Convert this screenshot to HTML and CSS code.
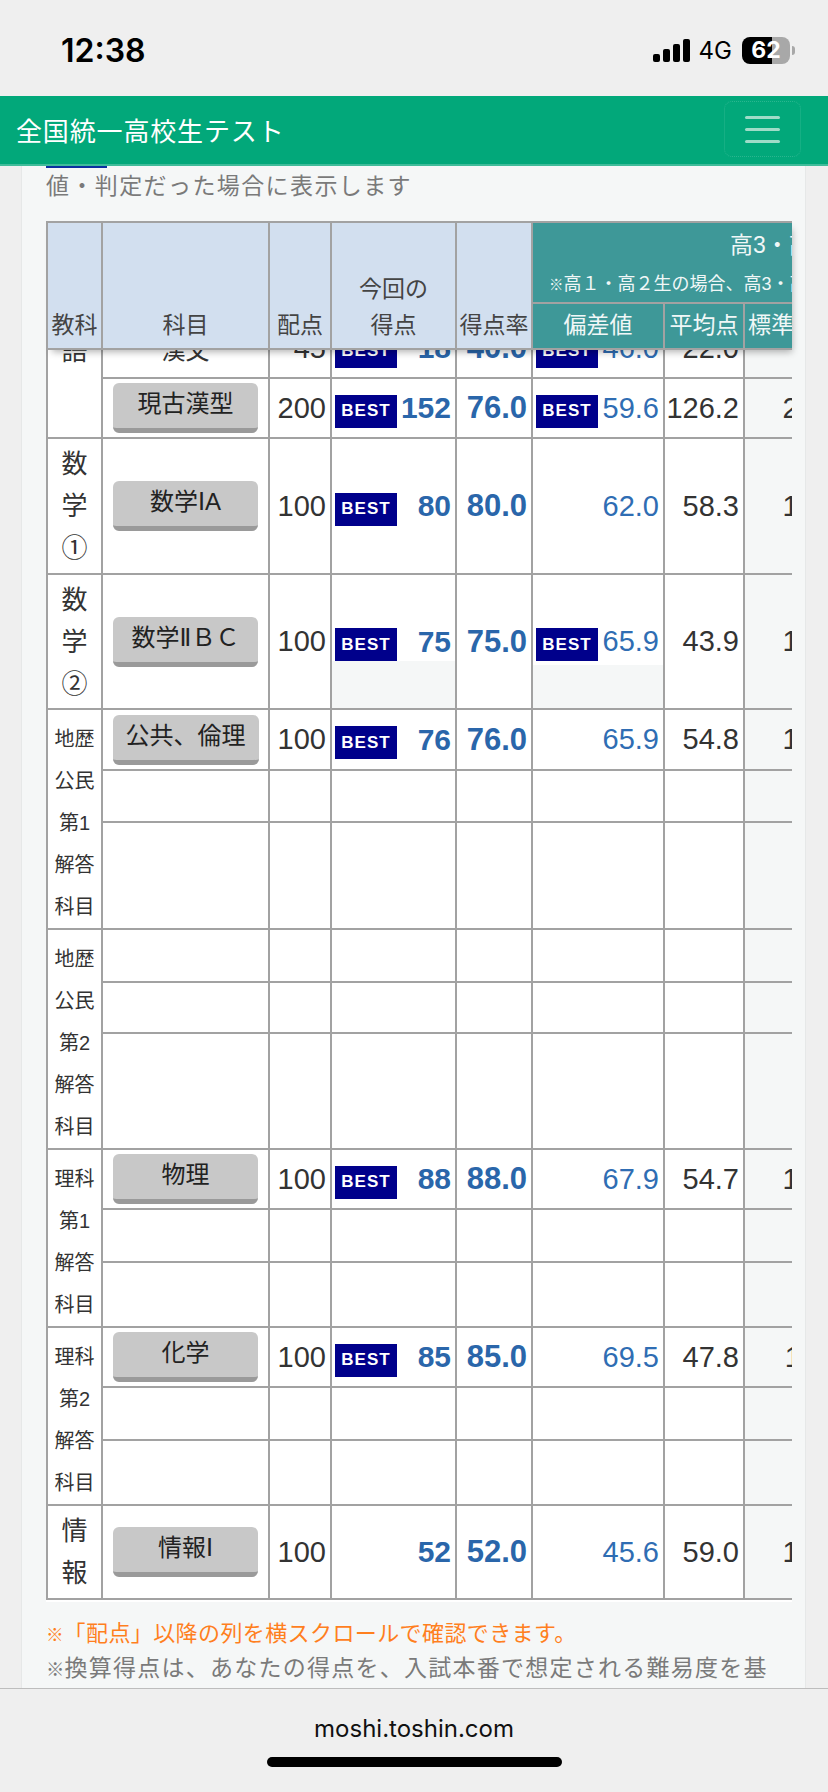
FILE: index.html
```html
<!DOCTYPE html>
<html lang="ja">
<head>
<meta charset="utf-8">
<title>全国統一高校生テスト</title>
<link rel="stylesheet" href="styles.css">
</head>
<body>
<div class="screen">
  <header class="status">
    <span class="clock">12:38</span>
    <div class="status-right">
      <svg class="signal" width="37" height="23" viewBox="0 0 37 23"><rect x="0" y="15" width="7" height="8" rx="2"/><rect x="10" y="10" width="7" height="13" rx="2"/><rect x="20" y="5" width="7" height="18" rx="2"/><rect x="30" y="0" width="7" height="23" rx="2"/></svg>
      <span class="net">4G</span>
      <div class="battery"><span class="battery-num">62</span></div>
      <span class="battery-tip"></span>
    </div>
  </header>
  <nav class="nav">
    <span class="brand">全国統一高校生テスト</span>
    <button class="burger"><span></span><span></span><span></span></button>
  </nav>
  <main class="main">
    <section class="card">
      <div class="mark"></div>
      <p class="lead">値・判定だった場合に表示します</p>
      <div class="head-clip">
        <table class="grid head">
          <colgroup><col class="c1"><col class="c2"><col class="c3"><col class="c4"><col class="c5"><col class="c6"><col class="c7"><col class="c8"></colgroup>
          <tr class="hr1">
            <th rowspan="2">教科</th><th rowspan="2">科目</th><th rowspan="2">配点</th><th rowspan="2">今回の<br>得点</th><th rowspan="2">得点率</th>
            <th colspan="3" class="teal top"><div class="t-title">高3・高卒生全体</div><div class="t-note"><span class="kome">※</span>高１・高２生の場合、高3・高卒生の成績を表示</div></th>
          </tr>
          <tr class="hr2"><th class="teal">偏差値</th><th class="teal">平均点</th><th class="teal">標準偏差</th></tr>
        </table>
      </div>
      <div class="body-clip">
        <table class="grid body">
          <colgroup><col class="c1"><col class="c2"><col class="c3"><col class="c4"><col class="c5"><col class="c6"><col class="c7"><col class="c8"></colgroup>
          <tr class="r60">
            <td rowspan="2" class="subj top-a">語</td><td class="name">漢文</td><td class="num">45</td>
            <td><div class="val"><span class="best">BEST</span><b>18</b></div></td><td class="num"><b>40.0</b></td>
            <td><div class="val"><span class="best">BEST</span><span class="dev">46.0</span></div></td><td class="num">22.0</td><td class="num sd">9.1</td>
          </tr>
          <tr class="r60">
            <td class="name"><a class="btn">現古漢型</a></td><td class="num">200</td>
            <td><div class="val"><span class="best">BEST</span><b>152</b></div></td><td class="num"><b>76.0</b></td>
            <td><div class="val"><span class="best">BEST</span><span class="dev">59.6</span></div></td><td class="num">126.2</td><td class="num sd">28.4</td>
          </tr>
          <tr class="r136">
            <td class="subj">数<br>学<br>①</td><td class="name"><a class="btn">数学ⅠA</a></td><td class="num">100</td>
            <td><div class="val"><span class="best">BEST</span><b>80</b></div></td><td class="num"><b>80.0</b></td>
            <td><div class="val end"><span class="dev">62.0</span></div></td><td class="num">58.3</td><td class="num sd">19.1</td>
          </tr>
          <tr class="r135">
            <td class="subj">数<br>学<br>②</td><td class="name"><a class="btn">数学ⅡＢＣ</a></td><td class="num">100</td>
            <td class="fade-a"><div class="val"><span class="best">BEST</span><b>75</b></div></td><td class="num"><b>75.0</b></td>
            <td class="fade-b"><div class="val"><span class="best">BEST</span><span class="dev">65.9</span></div></td><td class="num">43.9</td><td class="num sd">16.8</td>
          </tr>
          <tr class="r61">
            <td rowspan="3" class="subj small">地歴<br>公民<br>第1<br>解答<br>科目</td><td class="name"><a class="btn">公共、倫理</a></td><td class="num">100</td>
            <td><div class="val"><span class="best">BEST</span><b>76</b></div></td><td class="num"><b>76.0</b></td>
            <td><div class="val end"><span class="dev">65.9</span></div></td><td class="num">54.8</td><td class="num sd">17.4</td>
          </tr>
          <tr class="r52"><td></td><td></td><td></td><td></td><td></td><td></td><td class="sd"></td></tr>
          <tr class="r107"><td></td><td></td><td></td><td></td><td></td><td></td><td class="sd"></td></tr>
          <tr class="r53">
            <td rowspan="3" class="subj small">地歴<br>公民<br>第2<br>解答<br>科目</td><td></td><td></td><td></td><td></td><td></td><td></td><td class="sd"></td>
          </tr>
          <tr class="r51"><td></td><td></td><td></td><td></td><td></td><td></td><td class="sd"></td></tr>
          <tr class="r116"><td></td><td></td><td></td><td></td><td></td><td></td><td class="sd"></td></tr>
          <tr class="r60">
            <td rowspan="3" class="subj small">理科<br>第1<br>解答<br>科目</td><td class="name"><a class="btn">物理</a></td><td class="num">100</td>
            <td><div class="val"><span class="best">BEST</span><b>88</b></div></td><td class="num"><b>88.0</b></td>
            <td><div class="val end"><span class="dev">67.9</span></div></td><td class="num">54.7</td><td class="num sd">15.2</td>
          </tr>
          <tr class="r53"><td></td><td></td><td></td><td></td><td></td><td></td><td class="sd"></td></tr>
          <tr class="r65"><td></td><td></td><td></td><td></td><td></td><td></td><td class="sd"></td></tr>
          <tr class="r60">
            <td rowspan="3" class="subj small">理科<br>第2<br>解答<br>科目</td><td class="name"><a class="btn">化学</a></td><td class="num">100</td>
            <td><div class="val"><span class="best">BEST</span><b>85</b></div></td><td class="num"><b>85.0</b></td>
            <td><div class="val end"><span class="dev">69.5</span></div></td><td class="num">47.8</td><td class="num sd">11.1</td>
          </tr>
          <tr class="r53"><td></td><td></td><td></td><td></td><td></td><td></td><td class="sd"></td></tr>
          <tr class="r65"><td></td><td></td><td></td><td></td><td></td><td></td><td class="sd"></td></tr>
          <tr class="r94">
            <td class="subj">情<br>報</td><td class="name"><a class="btn">情報Ⅰ</a></td><td class="num">100</td>
            <td><div class="val end"><b>52</b></div></td><td class="num"><b>52.0</b></td>
            <td><div class="val end"><span class="dev">45.6</span></div></td><td class="num">59.0</td><td class="num sd">17.9</td>
          </tr>
        </table>
      </div>
      <p class="note-orange"><span class="kome">※</span>「配点」以降の列を横スクロールで確認できます。</p>
      <p class="note-grey"><span class="kome">※</span>換算得点は、あなたの得点を、入試本番で想定される難易度を基</p>
    </section>
  </main>
  <footer class="urlbar">
    <span class="url">moshi.toshin.com</span>
    <span class="home"></span>
  </footer>
</div>
</body>
</html>
```
FILE: styles.css
```css
* { box-sizing: border-box; }
html, body { margin: 0; padding: 0; }
body { font-family: "Liberation Sans", "Noto Sans CJK JP", sans-serif; background: #efefef; }
.screen { width: 828px; height: 1792px; display: flex; flex-direction: column; overflow: hidden; background: #efefef; }

.status { height: 96px; flex: none; display: flex; justify-content: space-between; align-items: center; padding: 4px 33px 0 61px; background: #efefef; }
.clock { font-family: Inter, sans-serif; font-weight: 600; font-size: 32px; color: #000; }
.status-right { display: flex; align-items: center; }
.signal { fill: #000; margin-right: 9px; }
.net { font-family: Inter, sans-serif; font-size: 24px; color: #000; margin-right: 10px; }
.battery { width: 48px; height: 27px; border-radius: 8px; background: linear-gradient(90deg, #000 0 30px, #a8a8a8 30px); display: flex; align-items: center; justify-content: center; }
.battery-num { font-family: Inter, sans-serif; font-weight: 700; font-size: 23px; color: #fff; }
.battery-tip { width: 3px; height: 9px; margin-left: 2px; background: #a8a8a8; border-radius: 0 3px 3px 0; }

.nav { height: 70px; flex: none; display: flex; justify-content: space-between; align-items: center; padding: 0 27px 2px 16px; background: #02a87a; border-bottom: 2px solid #40bc9a; position: relative; z-index: 3; }
.brand { color: #fff; font-size: 26px; letter-spacing: 0.85px; }
.burger { width: 77px; height: 56px; border: 1px dotted rgba(255,255,255,.16); border-radius: 8px; background: transparent; padding: 0; display: flex; flex-direction: column; align-items: center; justify-content: center; gap: 9px; }
.burger span { display: block; width: 35px; height: 3px; background: #9fdcc8; border-radius: 2px; }

.main { flex: 1; overflow: hidden; padding: 0 21px; }
.card { height: 100%; background: #f5f7f7; border-left: 1px solid #e6e8e8; border-right: 1px solid #e6e8e8; padding: 0 0 0 24px; width: 785px; }
.mark { width: 61px; height: 2px; background: #0a2fa0; }
.lead { margin: 0; padding-top: 2px; height: 53px; font-size: 23px; letter-spacing: 1.4px; line-height: 32px; color: #7a7a7a; }
.kome { font-size: 0.8em; letter-spacing: 0; }

.head-clip { width: 746px; overflow: hidden; box-shadow: 3px 5px 7px -3px rgba(0,0,0,.3); position: relative; z-index: 2; }
.body-clip { width: 746px; height: 1252px; overflow: hidden; background: #fff; }

.grid { table-layout: fixed; border-collapse: collapse; width: 797px; color: #333; }
.c1 { width: 55px; } .c2 { width: 167px; } .c3 { width: 62px; } .c4 { width: 125px; }
.c5 { width: 76px; } .c6 { width: 132px; } .c7 { width: 80px; } .c8 { width: 100px; }
.grid th, .grid td { border: 2px solid #a2a2a2; padding: 0; }

.head th { background: #d2dfef; font-weight: 400; font-size: 23px; line-height: 36px; color: #444; vertical-align: bottom; padding-bottom: 5px; white-space: nowrap; overflow: hidden; }
.hr1 { height: 81px; }
.hr2 { height: 46px; }
.head th.teal { background: #3e9898; color: #f0f7f7; text-align: center; }
.head th.top { text-align: left; vertical-align: top; overflow: visible; padding: 0; }
.t-title { padding: 5px 0 0 197px; line-height: 34px; font-size: 23px; }
.t-note { padding: 6px 0 0 16px; line-height: 32px; font-size: 18px; }

.body { margin-top: -33px; background: #fff; }
.r60 { height: 60px; } .r136 { height: 136px; } .r135 { height: 135px; } .r61 { height: 61px; }
.r52 { height: 52px; } .r107 { height: 107px; } .r53 { height: 53px; } .r51 { height: 51px; }
.r116 { height: 116px; } .r65 { height: 65px; } .r94 { height: 94px; }

.subj { text-align: center; font-size: 26px; line-height: 42px; color: #333; }
.subj.small { font-size: 20px; padding-top: 7px; }
.subj.top-a { vertical-align: top; padding-top: 11px; }
.name { text-align: center; font-size: 24px; color: #333; padding-right: 2px; }
.btn { display: inline-block; min-width: 145px; height: 50px; line-height: 42px; padding: 0 13px; font-family: "Liberation Sans", "DejaVu Sans", "Noto Sans CJK JP", sans-serif; font-size: 24px; color: #222; background: #c8c8c8; border-bottom: 5px solid #9a9a9a; border-radius: 6px; vertical-align: middle; }
.num { text-align: right; padding-right: 4px !important; font-size: 29px; color: #333; }
.num b { font-size: 31px; color: #2a66aa; }
.val b { font-size: 30px; color: #2a66aa; }
.sd { background: #f5f7f7; }
.val { display: flex; justify-content: space-between; align-items: center; padding: 0 4px 0 3px; font-size: 29px; }
.val.end { justify-content: flex-end; }
.dev { color: #2f6db3; }
.best { width: 62px; height: 33px; margin-top: 6px; background: #00008b; color: #fff; font-weight: 700; font-size: 17px; letter-spacing: 1px; display: flex; align-items: center; justify-content: center; }
.fade-a { background: linear-gradient(#fff 0 86px, #f5f7f7 86px); }
.fade-b { background: linear-gradient(#fff 0 90px, #f5f7f7 90px); }

.note-orange { margin: 0; padding-top: 15px; line-height: 33px; font-size: 22px; letter-spacing: 0.4px; color: #ff7f1e; white-space: nowrap; }
.note-grey { margin: 0; line-height: 33px; font-size: 23px; letter-spacing: 1.25px; color: #7a7a7a; white-space: nowrap; }

.urlbar { height: 104px; flex: none; background: #efefef; border-top: 1px solid #bdbdbd; display: flex; flex-direction: column; align-items: center; position: relative; z-index: 3; }
.url { font-family: Inter, sans-serif; font-size: 24px; color: #111; margin-top: 26px; line-height: 28px; }
.home { width: 295px; height: 10px; border-radius: 5px; background: #000; margin-top: 14px; }
```
